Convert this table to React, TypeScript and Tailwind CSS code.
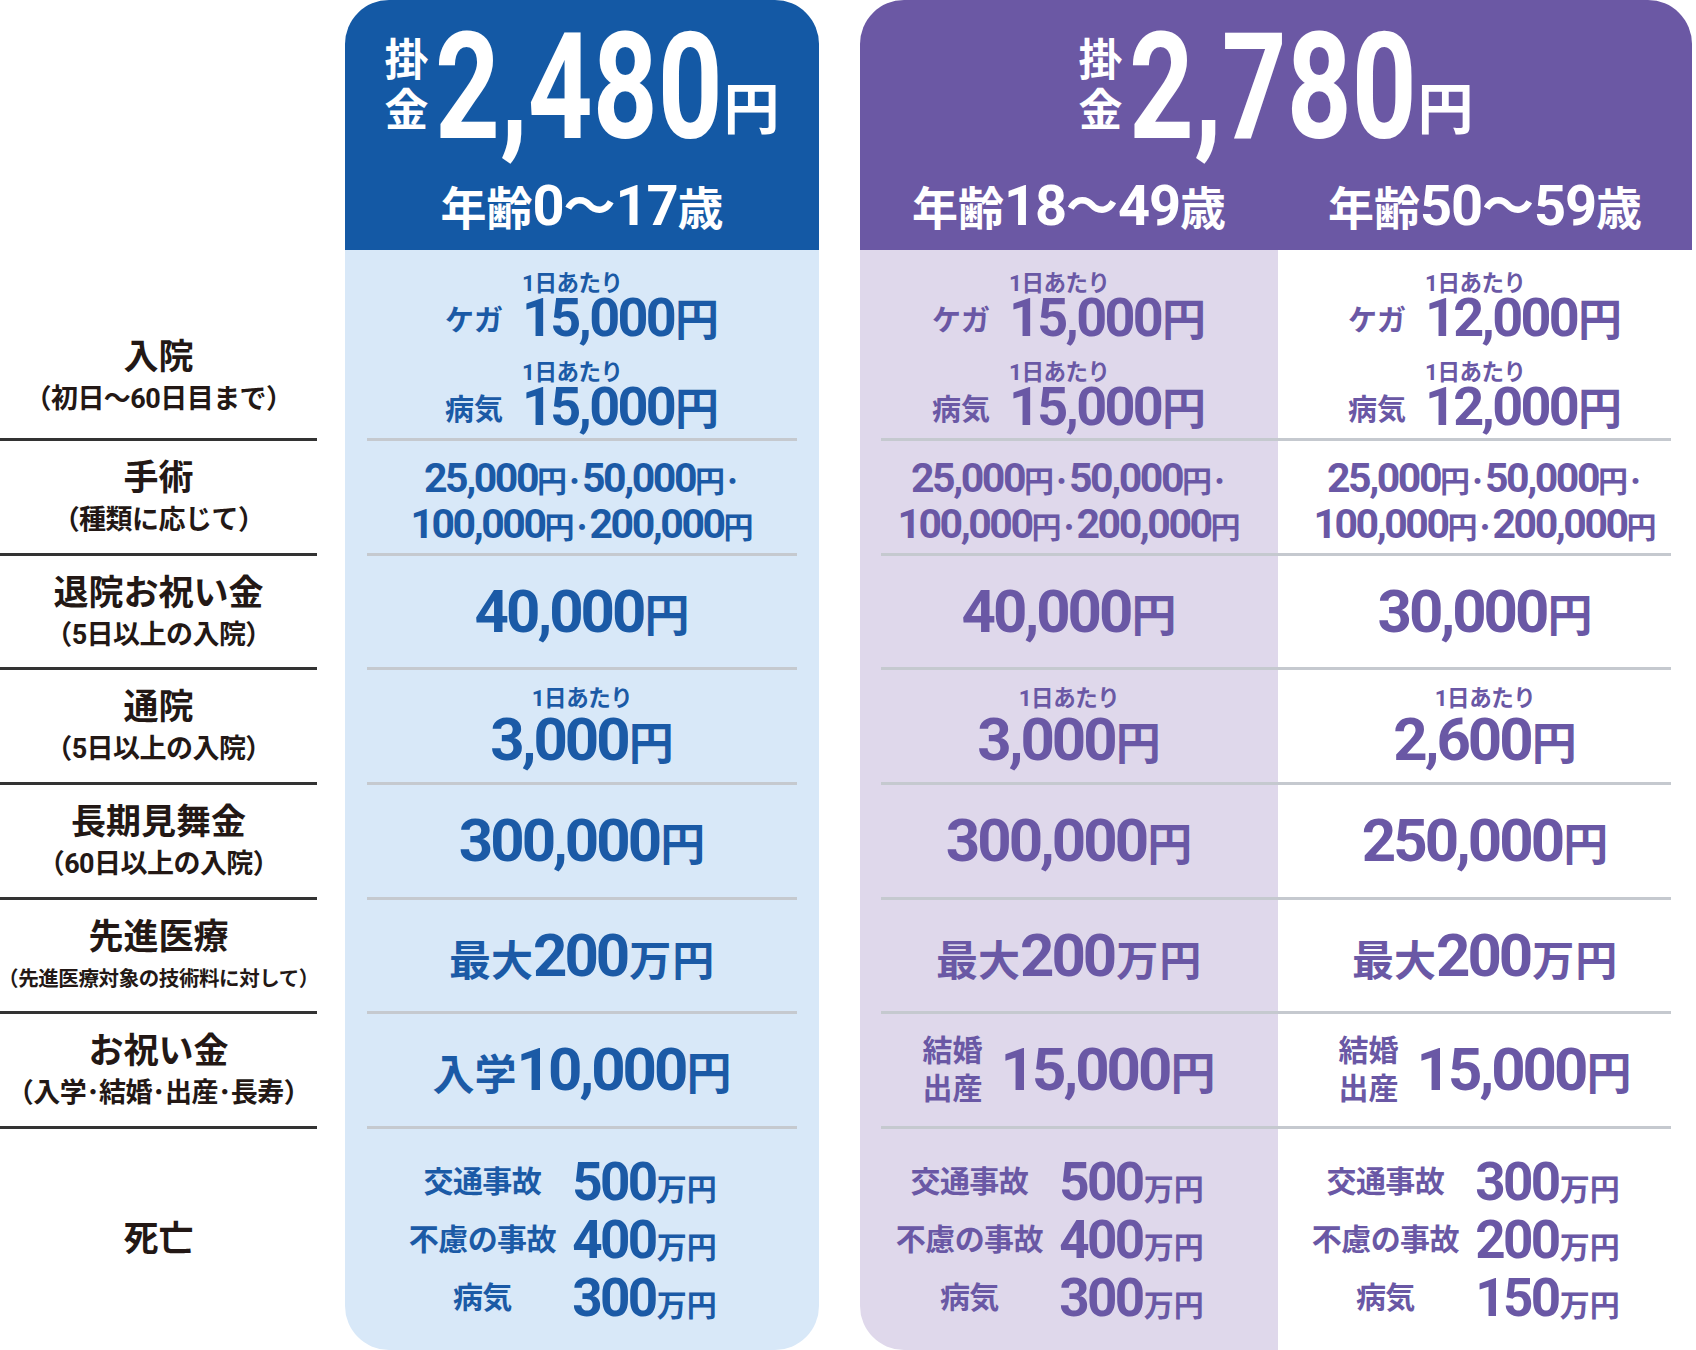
import { Fragment, type ReactNode } from 'react';

const ROW_H = ['h-[188px]', 'h-[112px]', 'h-[111px]', 'h-[112px]', 'h-[112px]', 'h-[111px]', 'h-[112px]', 'flex-1'];

const LABELS: [string, string][] = [
  ['入院', '（初日〜60日目まで）'],
  ['手術', '（種類に応じて）'],
  ['退院お祝い金', '（5日以上の入院）'],
  ['通院', '（5日以上の入院）'],
  ['長期見舞金', '（60日以上の入院）'],
  ['先進医療', '（先進医療対象の技術料に対して）'],
  ['お祝い金', '（入学･結婚･出産･長寿）'],
  ['死亡', ''],
];

// digits + unit on one baseline
function Yen({
  n,
  num = 'text-[60px] tracking-[-0.05em]',
  unit = 'text-[45px]',
  u = '円',
  className = 'leading-none',
}: {
  n: string;
  num?: string;
  unit?: string;
  u?: string;
  className?: string;
}) {
  return (
    <span className={`flex items-baseline ${className}`}>
      <span className={num}>{n}</span>
      <span className={`ml-[1px] leading-none ${unit}`}>{u}</span>
    </span>
  );
}

function Premium({ value }: { value: string }) {
  return (
    <div className="flex h-[178px] items-start justify-center text-white">
      <div className="mt-[36px] flex flex-col text-[44px] font-bold leading-[50px]">
        <span>掛</span>
        <span>金</span>
      </div>
      {/* condensed figure: narrowed from the left edge */}
      <div className="ml-[6px] mt-[14px] h-[148px] w-[281px]">
        <span className="block w-max origin-left scale-x-[0.765] text-[148px] font-bold leading-[148px]">{value}</span>
      </div>
      <span className="ml-[8px] mt-[82px] text-[56px] font-bold leading-[56px]">円</span>
    </div>
  );
}

function Age({ from, to }: { from: string; to: string }) {
  return (
    <div className="flex items-baseline justify-center font-bold leading-[56px] text-white">
      <span className="text-[46px]">年齢</span>
      <span className="text-[56px] tracking-[-0.02em]">{from}</span>
      <span className="text-[52px]">〜</span>
      <span className="text-[56px] tracking-[-0.02em]">{to}</span>
      <span className="text-[46px]">歳</span>
    </div>
  );
}

function PerDayLine({ label, n }: { label: string; n: string }) {
  return (
    <div className="flex items-end">
      <span className="mb-[4px] mr-[19px] text-[29px] leading-[36px]">{label}</span>
      <div className="flex flex-col">
        <span className="text-[22.5px] leading-[24px] tracking-[-0.02em]">1日あたり</span>
        <Yen n={n} num="text-[54px] tracking-[-0.05em]" unit="text-[44px]" className="leading-[46px]" />
      </div>
    </div>
  );
}

function Hospital({ n }: { n: string }) {
  return (
    <div className="flex flex-col gap-[17px]">
      <PerDayLine label="ケガ" n={n} />
      <PerDayLine label="病気" n={n} />
    </div>
  );
}

function Dot() {
  return <span className="text-[30px] leading-none">･</span>;
}

function Surgery() {
  const num = 'text-[41px] tracking-[-0.06em]';
  const yen = 'text-[30px] leading-none';
  return (
    <div className="flex flex-col items-center pt-[8px] leading-[46px]">
      <span className="flex items-baseline">
        <span className={num}>25,000</span>
        <span className={yen}>円</span>
        <Dot />
        <span className={num}>50,000</span>
        <span className={yen}>円</span>
        <Dot />
      </span>
      <span className="flex items-baseline">
        <span className={num}>100,000</span>
        <span className={yen}>円</span>
        <Dot />
        <span className={num}>200,000</span>
        <span className={yen}>円</span>
      </span>
    </div>
  );
}

function Visit({ n }: { n: string }) {
  return (
    <div className="flex flex-col items-center">
      <span className="text-[22.5px] leading-[24px] tracking-[-0.02em]">1日あたり</span>
      <Yen n={n} className="mt-[5px] leading-[50px]" />
    </div>
  );
}

function Max() {
  return (
    <span className="flex items-baseline leading-none">
      <span className="text-[42px]">最大</span>
      <span className="text-[60px] tracking-[-0.05em]">200</span>
      <span className="ml-[2px] text-[42px] tracking-[0.02em]">万円</span>
    </span>
  );
}

function School() {
  return (
    <span className="flex items-baseline leading-none">
      <span className="text-[42px]">入学</span>
      <span className="text-[60px] tracking-[-0.05em]">10,000</span>
      <span className="ml-[1px] text-[45px]">円</span>
    </span>
  );
}

function Wedding() {
  return (
    <div className="flex items-center">
      <div className="mr-[18px] flex flex-col text-[30px] leading-[38px]">
        <span>結婚</span>
        <span>出産</span>
      </div>
      <Yen n="15,000" />
    </div>
  );
}

function Death({ vals }: { vals: string[] }) {
  const labels = ['交通事故', '不慮の事故', '病気'];
  return (
    <div className="grid grid-cols-[150px_auto] items-center gap-x-[15px] pr-[40px]">
      {labels.map((l, i) => (
        <Fragment key={l}>
          <span className="text-center text-[30px] leading-[58px] tracking-[-0.02em]">{l}</span>
          <Yen n={vals[i]} num="text-[53px] tracking-[-0.05em]" unit="text-[30px]" u="万円" className="leading-[58px]" />
        </Fragment>
      ))}
    </div>
  );
}

function Body({ cells, sep, className }: { cells: ReactNode[]; sep: string; className: string }) {
  return (
    <div className={`flex flex-col font-bold ${className}`}>
      {cells.map((c, i) => (
        <Fragment key={i}>
          <div className={`flex shrink-0 flex-col items-center justify-center ${ROW_H[i]} ${i === 0 ? 'pt-[15px]' : ''}`}>
            {c}
          </div>
          {i < cells.length - 1 && <div className={`h-[3px] shrink-0 bg-[#c5c9cf] ${sep}`} />}
        </Fragment>
      ))}
    </div>
  );
}

export default function App() {
  const blue = [
    <Hospital n="15,000" />,
    <Surgery />,
    <Yen n="40,000" />,
    <Visit n="3,000" />,
    <Yen n="300,000" />,
    <Max />,
    <School />,
    <Death vals={['500', '400', '300']} />,
  ];
  const young = [
    <Hospital n="15,000" />,
    <Surgery />,
    <Yen n="40,000" />,
    <Visit n="3,000" />,
    <Yen n="300,000" />,
    <Max />,
    <Wedding />,
    <Death vals={['500', '400', '300']} />,
  ];
  const senior = [
    <Hospital n="12,000" />,
    <Surgery />,
    <Yen n="30,000" />,
    <Visit n="2,600" />,
    <Yen n="250,000" />,
    <Max />,
    <Wedding />,
    <Death vals={['300', '200', '150']} />,
  ];

  return (
    <div className="flex h-[1350px] w-[1696px] bg-white font-['Roboto','Noto_Sans_CJK_JP',sans-serif]">
      {/* row labels */}
      <div className="flex w-[317px] flex-col pt-[250px] font-bold text-[#231815]">
        {LABELS.map(([main, sub], i) => (
          <Fragment key={main}>
            <div
              className={`flex shrink-0 flex-col items-center ${ROW_H[i]} ${i === 0 ? 'justify-start pt-[88px]' : 'justify-center'}`}
            >
              <span className="text-[35px] leading-[40px]">{main}</span>
              {sub && (
                <span
                  className={`mt-[6px] whitespace-nowrap leading-[30px] tracking-[-0.02em] ${i === 5 ? 'text-[20.5px]' : 'text-[27px]'}`}
                >
                  {sub}
                </span>
              )}
            </div>
            {i < LABELS.length - 1 && <div className="h-[3px] shrink-0 bg-[#333]" />}
          </Fragment>
        ))}
      </div>

      {/* 0-17 */}
      <div className="ml-[28px] flex w-[474px] flex-col">
        <div className="flex h-[250px] shrink-0 flex-col rounded-t-[44px] bg-[#1459a5]">
          <Premium value="2,480" />
          <Age from="0" to="17" />
        </div>
        <Body cells={blue} sep="mx-[22px]" className="flex-1 rounded-b-[44px] bg-[#d8e8f8] text-[#1b5aa6]" />
      </div>

      {/* 18-59 */}
      <div className="ml-[41px] flex w-[832px] flex-col">
        <div className="flex h-[250px] shrink-0 flex-col rounded-t-[44px] bg-[#6b58a4]">
          <Premium value="2,780" />
          <div className="flex">
            <div className="w-[418px]">
              <Age from="18" to="49" />
            </div>
            <div className="flex-1">
              <Age from="50" to="59" />
            </div>
          </div>
        </div>
        <div className="flex flex-1">
          <Body cells={young} sep="ml-[21px]" className="w-[418px] rounded-bl-[44px] bg-[#dfd8eb] text-[#6a58a5]" />
          <Body cells={senior} sep="mr-[21px]" className="flex-1 text-[#6a58a5]" />
        </div>
      </div>
    </div>
  );
}
